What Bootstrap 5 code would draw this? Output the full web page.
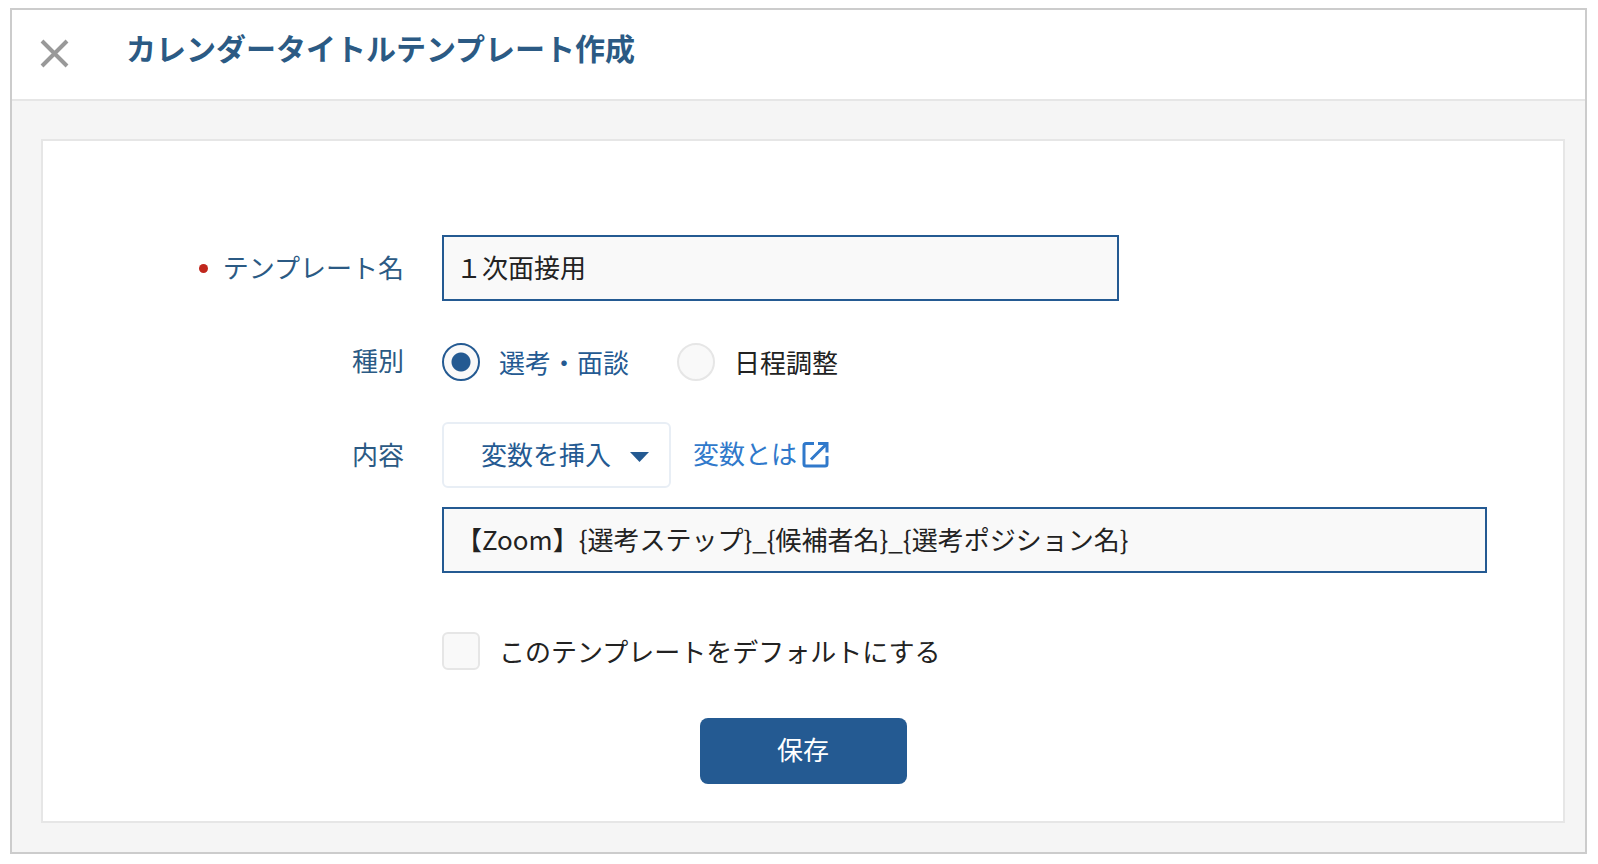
<!DOCTYPE html>
<html lang="ja">
<head>
<meta charset="utf-8">
<meta name="viewport" content="width=device-width, initial-scale=1">
<title>カレンダータイトルテンプレート作成</title>
<link href="https://cdn.jsdelivr.net/npm/bootstrap@5.3.0/dist/css/bootstrap.min.css" rel="stylesheet">
<style>
  :root { --navy: #245a92; --label: #2b5a84; --ink: #222; --line: #e6e6e6; }
  body { font-family: "Noto Sans CJK JP", sans-serif; font-size: 26px; line-height: 38px; color: var(--ink); background: #fff; padding: 8px 11px 10px 10px; }
  .panel { border: 2px solid #ccc; background: #f5f5f5; }
  .panel-head { height: 91px; padding: 0 28px 16px; border-bottom: 2px solid var(--line); background: #fff; }
  .panel-title { font-size: 30px; line-height: 40px; font-weight: 700; color: var(--label); margin: 0 0 0 56px; }
  .close-btn { width: 30px; height: 30px; padding: 0; border: 0; background: none; line-height: 0; margin-top: 12px; }
  .panel-body { padding: 38px 20px 29px 29px; }
  .sheet { border: 2px solid var(--line); background: #fff; padding: 94px 0 37px; }
  .form-line { display: grid; grid-template-columns: 361px minmax(0, 1fr); column-gap: 38px; padding-right: 76px; }
  .kind-line { margin-top: 42px; }
  .body-line { margin-top: 41px; }
  .line-label { color: var(--label); text-align: right; line-height: 34px; }
  .tall { padding-top: 15px; }
  .req::before { content: ""; display: inline-block; width: 9px; height: 9px; border-radius: 50%; background: #c0271d; margin-right: 15px; vertical-align: 5px; }
  .text-box { height: 66px; padding: 0 12px 3px; border: 2px solid var(--navy); border-radius: 0; background: #f9f9f9; font-size: 26px; line-height: 38px; color: var(--ink); }
  .text-box:focus { background: #f9f9f9; border-color: var(--navy); }
  .name-box { max-width: 677px; }
  .body-box { margin-top: 19px; }
  .form-check-input.pick { float: none; flex: none; width: 38px; height: 38px; margin: 0; border: 2px solid var(--line); background-color: #f9f9f9; }
  .form-check-input.pick[type=checkbox] { border-radius: 6px; }
  .form-check-input.pick[type=radio]:checked { border-color: var(--navy); background-color: #f9f9f9; background-image: radial-gradient(circle, var(--navy) 9px, transparent 10px); }
  .pick:checked + label { color: var(--navy); }
  .choices { gap: 48px; }
  .choice { gap: 19px; }
  .default-line { margin-top: 59px; }
  .var-btn { height: 66px; padding: 0 20px 2px 37px; border: 2px solid #e8eef5; border-radius: 6px; font-size: 26px; line-height: 38px; color: var(--navy); background: #fff; gap: 19px; }
  .var-btn svg { margin-top: 6px; }
  .help-link { color: #3079cb; gap: 5px; margin-left: 22px; padding-bottom: 4px; }
  .help-link svg { margin-top: 2px; }
  .save-line { margin-top: 48px; }
  .save-btn { width: 207px; height: 66px; border: 0; border-radius: 8px; background: var(--navy); color: #fff; font-size: 26px; line-height: 38px; padding: 0 0 5px; }
  .save-btn:hover { background: #1d4b7b; color: #fff; }
</style>
</head>
<body>
<main class="panel">
  <header class="panel-head d-flex align-items-center">
    <button type="button" class="close-btn" aria-label="閉じる">
      <svg width="30" height="30" viewBox="0 0 30 30" fill="none" stroke="#999" stroke-width="4"><path d="M2 3 27 28M27 3 2 28"/></svg>
    </button>
    <h1 class="panel-title">カレンダータイトルテンプレート作成</h1>
  </header>
  <div class="panel-body">
    <form class="sheet">
      <div class="form-line">
        <label class="line-label tall req" for="tplName">テンプレート名</label>
        <input type="text" class="form-control text-box name-box" id="tplName" value="１次面接用">
      </div>
      <div class="form-line kind-line" role="radiogroup" aria-labelledby="kindLabel">
        <span class="line-label" id="kindLabel">種別</span>
        <div class="choices d-flex align-items-center">
          <div class="choice d-flex align-items-center">
            <input class="form-check-input pick" type="radio" name="kind" id="kindInterview" checked>
            <label for="kindInterview">選考・面談</label>
          </div>
          <div class="choice d-flex align-items-center">
            <input class="form-check-input pick" type="radio" name="kind" id="kindSchedule">
            <label for="kindSchedule">日程調整</label>
          </div>
        </div>
      </div>
      <div class="form-line body-line">
        <label class="line-label tall" for="tplBody">内容</label>
        <div>
          <div class="d-flex align-items-center">
            <button type="button" class="btn var-btn d-flex align-items-center" aria-haspopup="true">変数を挿入
              <svg width="19" height="10" viewBox="0 0 19 10" fill="currentColor" aria-hidden="true"><path d="M0 0H19L9.5 10z"/></svg>
            </button>
            <a href="#" class="help-link d-flex align-items-center text-decoration-none">変数とは<svg width="27" height="27" viewBox="0 0 27 27" fill="none" stroke="currentColor" stroke-width="3" aria-hidden="true"><path d="M12 2.500H4Q2 2.500 2 4.500V23Q2 25 4 25H23Q25 25 25 23V15"/><path d="M16 2.500H25V11.500M24.500 3 9 18.500"/></svg></a>
          </div>
          <input type="text" class="form-control text-box body-box" id="tplBody" value="【Zoom】{選考ステップ}_{候補者名}_{選考ポジション名}">
          <div class="choice default-line d-flex align-items-center">
            <input class="form-check-input pick" type="checkbox" id="asDefault">
            <label for="asDefault">このテンプレートをデフォルトにする</label>
          </div>
        </div>
      </div>
      <div class="save-line d-flex justify-content-center">
        <button type="submit" class="btn save-btn">保存</button>
      </div>
    </form>
  </div>
</main>
<script src="https://cdn.jsdelivr.net/npm/bootstrap@5.3.0/dist/js/bootstrap.bundle.min.js"></script>
</body>
</html>
